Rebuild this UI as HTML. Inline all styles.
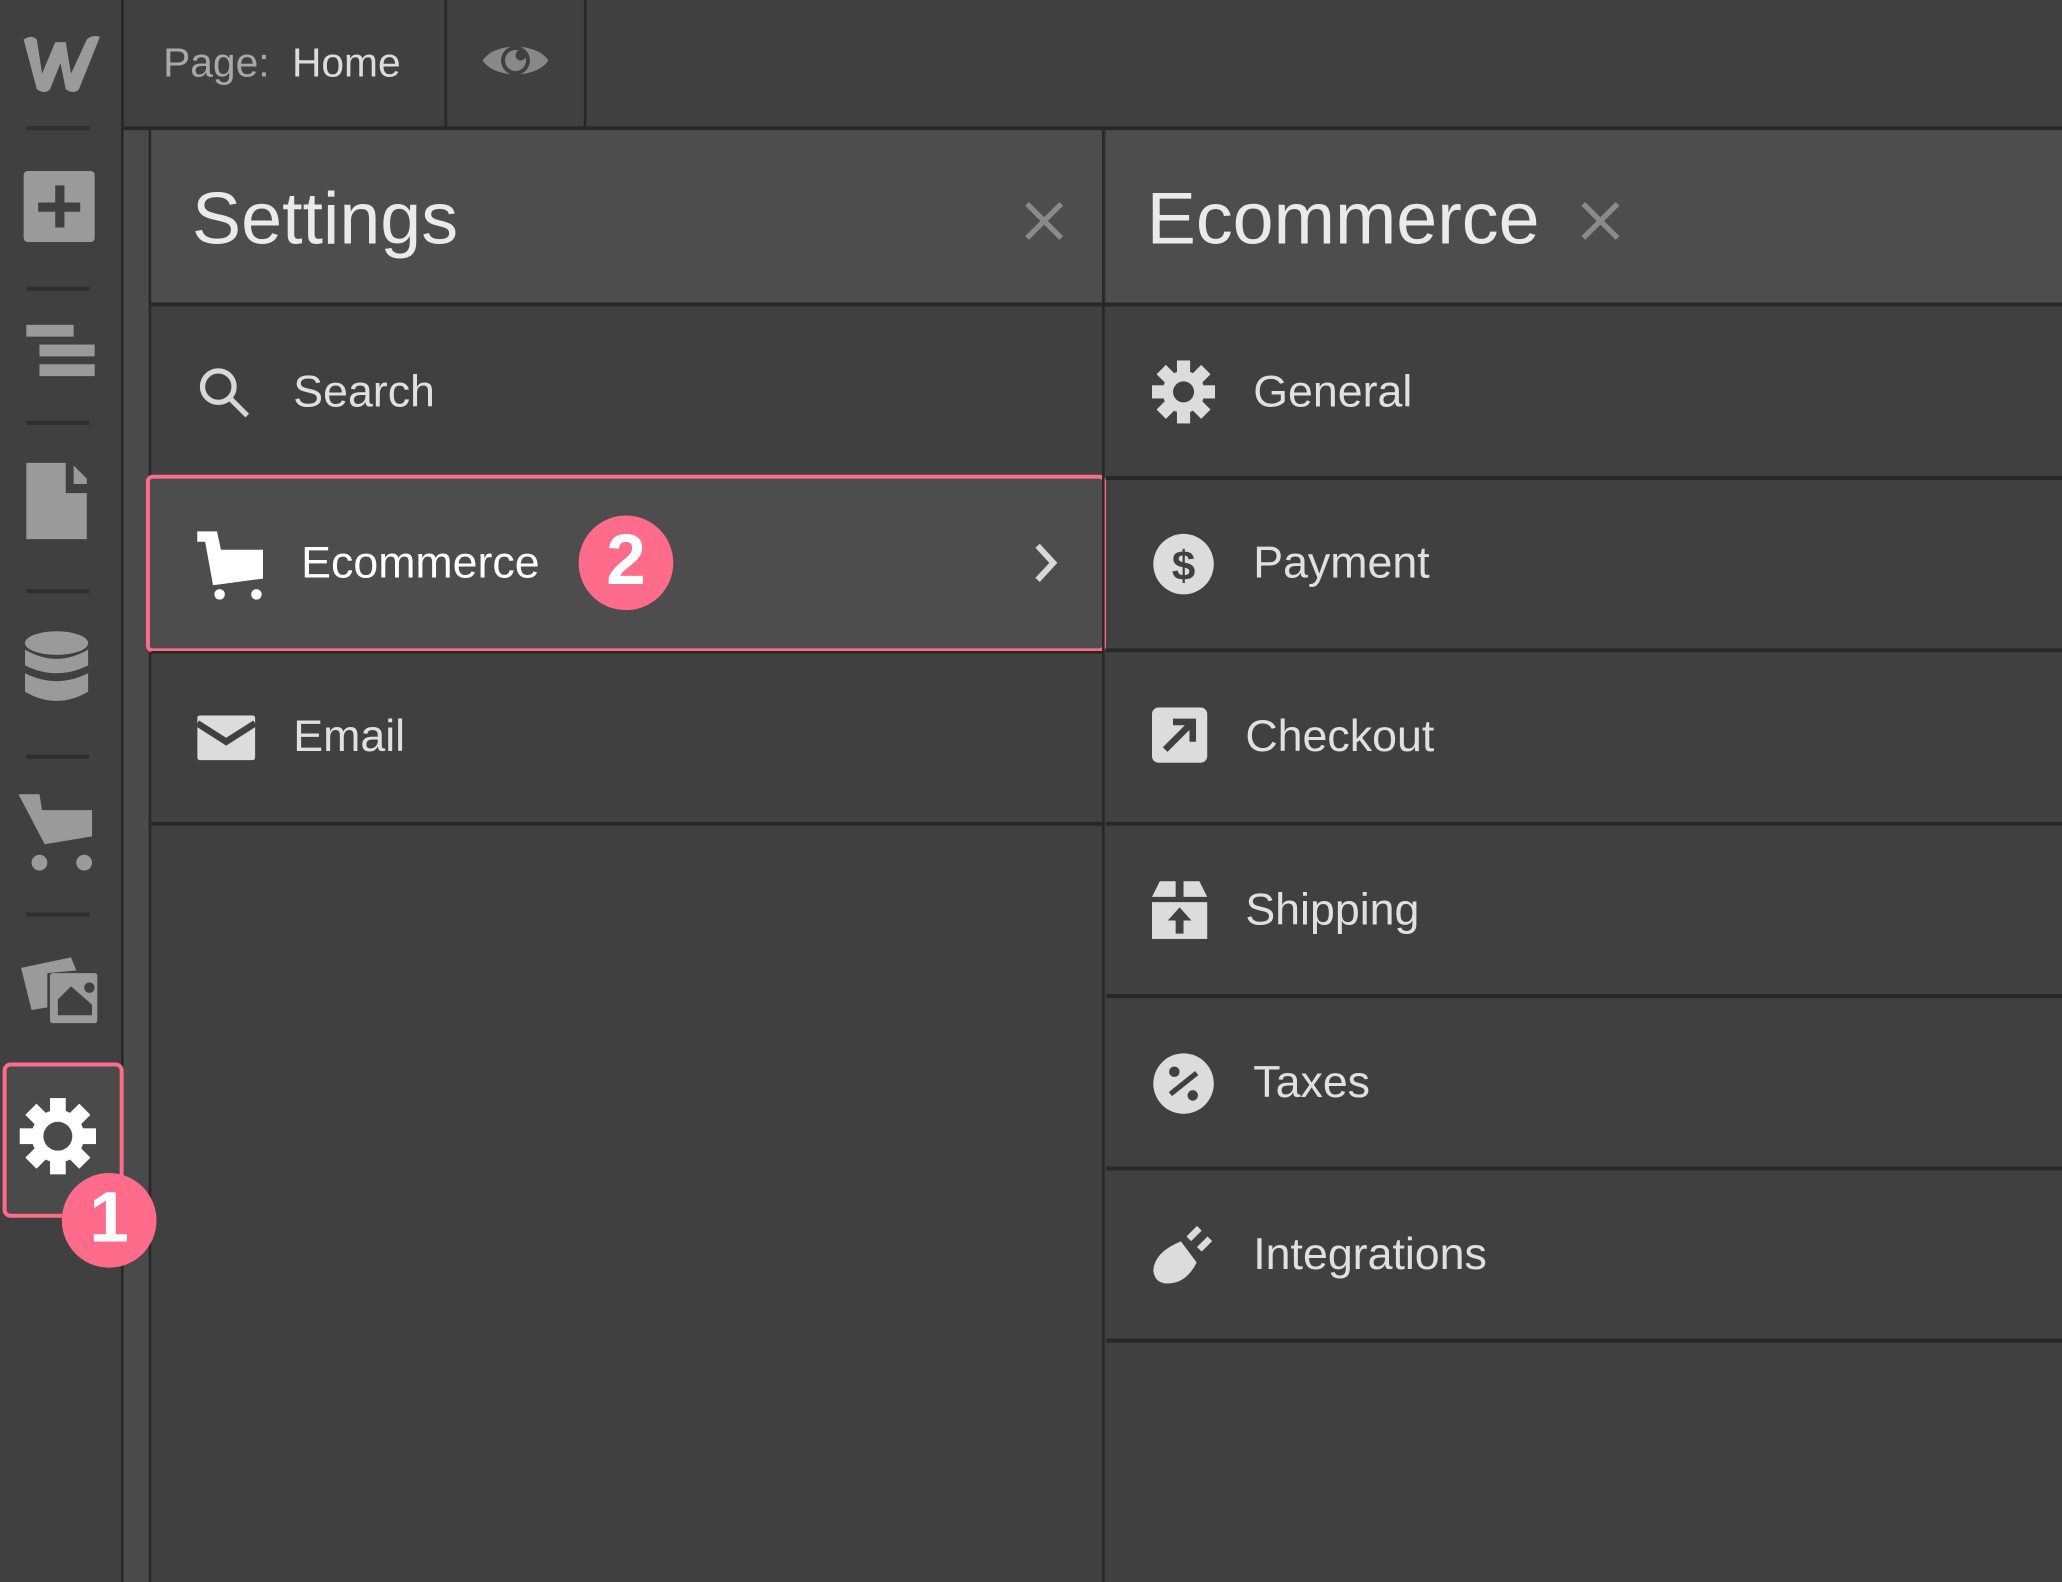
<!DOCTYPE html>
<html><head><meta charset="utf-8"><style>
html,body{margin:0;padding:0;background:#404040;overflow:hidden;width:2062px;height:1582px}
#w{position:absolute;left:0;top:0;width:1568px;height:1203px;transform:scale(1.31505);transform-origin:0 0;background:#404040;font-family:"Liberation Sans",sans-serif}
.a{position:absolute}
.t{position:absolute;font-size:34px;color:#e0e0e0;line-height:1}
.hl{position:absolute;height:2px;background:#282828}
.vl{position:absolute;width:2px;background:#282828}
.sep{position:absolute;left:20px;width:48px;height:3px;background:#2e2e2e}
</style></head><body><div id="w">
<div class="hl" style="left:94px;top:96px;width:1474px;height:3px"></div>
<div class="t" style="left:124px;top:32px;font-size:31px;color:#a8a8a8">Page:</div>
<div class="t" style="left:222px;top:32px;font-size:31px;color:#dcdcdc">Home</div>
<div class="vl" style="left:338px;top:0;height:96px"></div>
<div class="vl" style="left:444px;top:0;height:96px"></div>
<svg class="a" style="left:366px;top:28px" width="52" height="36" viewBox="0 0 52 36"><path d="M1 18C10 4 42 4 51 18C42 32 10 32 1 18Z" fill="#888"/><circle cx="26" cy="18" r="11" fill="#404040"/><circle cx="26" cy="18" r="8" fill="#888"/><circle cx="30" cy="14" r="4" fill="#404040"/></svg>
<div class="vl" style="left:92px;top:0;height:1203px;background:#262626"></div>
<div class="a" style="left:94px;top:99px;width:19px;height:1104px;background:#4a4a4a"></div>
<div class="vl" style="left:113px;top:99px;height:1104px"></div>
<svg class="a" style="left:16px;top:26px" width="62" height="46"><path d="M2 4Q8 0 12 4L16 30L26 6H34L38 30L50 4Q54 0 60 2L44 42Q40 46 34 42L30 22L22 42Q18 46 12 42Z" fill="#9a9a9a"/></svg>
<div class="sep" style="top:96px"></div>
<div class="a" style="left:18px;top:130px;width:54px;height:54px;background:#9a9a9a;border-radius:3px"></div>
<div class="a" style="left:29px;top:154px;width:32px;height:7px;background:#404040"></div>
<div class="a" style="left:42px;top:141px;width:7px;height:32px;background:#404040"></div>
<div class="sep" style="top:218px"></div>
<div class="a" style="left:20px;top:247px;width:36px;height:9px;background:#9a9a9a"></div>
<div class="a" style="left:30px;top:262px;width:42px;height:9px;background:#9a9a9a"></div>
<div class="a" style="left:30px;top:277px;width:42px;height:9px;background:#9a9a9a"></div>
<div class="sep" style="top:320px"></div>
<svg class="a" style="left:18px;top:350px" width="50" height="62"><path d="M2 2H32V25H48V60H2Z" fill="#9a9a9a"/><path d="M38 4L48 14V18H38Z" fill="#9a9a9a"/></svg>
<div class="sep" style="top:448px"></div>
<svg class="a" style="left:17px;top:478px" width="52" height="64"><ellipse cx="26" cy="11" rx="24" ry="9" fill="#9a9a9a"/><path d="M2 16Q26 30 50 16V28Q26 40 2 28Z" fill="#9a9a9a"/><path d="M2 34Q26 46 50 34V48Q26 62 2 48Z" fill="#9a9a9a"/></svg>
<div class="sep" style="top:574px"></div>
<svg class="a" style="left:12px;top:600px" width="62" height="66"><path d="M2 4H18L20 16H58V36L22 42Z" fill="#9a9a9a"/><circle cx="18" cy="56" r="6" fill="#9a9a9a"/><circle cx="52" cy="56" r="6" fill="#9a9a9a"/></svg>
<div class="sep" style="top:694px"></div>
<svg class="a" style="left:12px;top:720px" width="64" height="60"><path d="M4 16L42 8L46 18L24 20L24 46L12 48Z" fill="#9a9a9a"/><rect x="26" y="20" width="36" height="38" rx="2" fill="#9a9a9a"/><path d="M32 52L32 40L42 30L58 44V52Z" fill="#404040"/><circle cx="56" cy="31" r="4" fill="#404040"/></svg>
<div class="a" style="left:2px;top:808px;background:#4a4a4a;border:3px solid #ff6b8a;border-radius:6px;box-sizing:border-box;width:92px;height:118px"></div>
<svg class="a" style="left:14px;top:834px" width="60" height="60" viewBox="-30 -30 60 60"><g fill="#fff"><circle r="20"/><g id="tt"><rect x="-6" y="-29" width="12" height="14"/></g><use href="#tt" transform="rotate(45)"/><use href="#tt" transform="rotate(90)"/><use href="#tt" transform="rotate(135)"/><use href="#tt" transform="rotate(180)"/><use href="#tt" transform="rotate(225)"/><use href="#tt" transform="rotate(270)"/><use href="#tt" transform="rotate(315)"/></g><circle r="11" fill="#4a4a4a"/></svg>
<div class="a" style="left:47px;top:892px;width:72px;height:72px;border-radius:50%;background:#ff6b8a"></div>
<div class="t" style="left:47px;top:899px;width:72px;text-align:center;font-size:54px;font-weight:bold;color:#fff">1</div>
<div class="a" style="left:115px;top:99px;width:724px;height:132px;background:#4d4d4d"></div>
<div class="t" style="left:146px;top:138px;font-size:56px;color:#eaeaea">Settings</div>
<svg class="a" style="left:778px;top:152px" width="32" height="32"><path d="M3 3L29 29M29 3L3 29" stroke="#8a8a8a" stroke-width="4"/></svg>
<div class="hl" style="left:115px;top:230px;width:1453px;height:3px"></div>
<svg class="a" style="left:150px;top:278px" width="42" height="42"><circle cx="16" cy="16" r="12" fill="none" stroke="#d8d8d8" stroke-width="4"/><path d="M25 25L38 38" stroke="#d8d8d8" stroke-width="4"/></svg>
<div class="t" style="left:223px;top:281px">Search</div>
<div class="a" style="left:111px;top:361px;width:730px;height:135px;background:#4d4d4d;border:3px solid #ff6b8a;border-radius:5px;box-sizing:border-box"></div>
<svg class="a" style="left:148px;top:404px" width="56" height="52"><path d="M2 0H17L20 14H52V36L14 41L8 8H2Z" fill="#fff"/><circle cx="19" cy="48" r="4" fill="#fff"/><circle cx="47" cy="48" r="4" fill="#fff"/></svg>
<div class="t" style="left:229px;top:411px;color:#fff">Ecommerce</div>
<div class="a" style="left:440px;top:392px;width:72px;height:72px;border-radius:50%;background:#ff6b8a"></div>
<div class="t" style="left:440px;top:399px;width:72px;text-align:center;font-size:54px;font-weight:bold;color:#fff">2</div>
<svg class="a" style="left:784px;top:412px" width="24" height="32"><path d="M5 3L17 16L5 29" fill="none" stroke="#d8d8d8" stroke-width="4.5"/></svg>
<div class="hl" style="left:115px;top:495px;width:724px"></div>
<svg class="a" style="left:150px;top:544px" width="46" height="36"><rect x="0" y="0" width="44" height="34" rx="2" fill="#dcdcdc"/><path d="M0 6L22 20L44 6" fill="none" stroke="#404040" stroke-width="5"/></svg>
<div class="t" style="left:223px;top:543px">Email</div>
<div class="hl" style="left:115px;top:625px;width:724px;height:3px"></div>
<div class="vl" style="left:838px;top:99px;height:1104px"></div>
<div class="a" style="left:841px;top:99px;width:727px;height:131px;background:#4d4d4d"></div>
<div class="t" style="left:872px;top:138px;font-size:56px;color:#eaeaea">Ecommerce</div>
<svg class="a" style="left:1201px;top:152px" width="32" height="32"><path d="M3 3L29 29M29 3L3 29" stroke="#8a8a8a" stroke-width="4"/></svg>
<svg class="a" style="left:876px;top:274px" width="48" height="48" viewBox="-24 -24 48 48"><g fill="#dcdcdc"><circle r="16"/><g id="t2"><rect x="-5" y="-24" width="10" height="12"/></g><use href="#t2" transform="rotate(45)"/><use href="#t2" transform="rotate(90)"/><use href="#t2" transform="rotate(135)"/><use href="#t2" transform="rotate(180)"/><use href="#t2" transform="rotate(225)"/><use href="#t2" transform="rotate(270)"/><use href="#t2" transform="rotate(315)"/></g><circle r="8" fill="#404040"/></svg>
<div class="t" style="left:953px;top:281px">General</div>
<div class="hl" style="left:841px;top:362px;width:727px;height:3px"></div>
<svg class="a" style="left:876px;top:405px" width="48" height="48"><circle cx="24" cy="24" r="23" fill="#dcdcdc"/><text x="24" y="36" text-anchor="middle" font-family="Liberation Sans" font-weight="bold" font-size="32" fill="#404040">$</text></svg>
<div class="t" style="left:953px;top:411px">Payment</div>
<div class="hl" style="left:841px;top:493px;width:727px;height:3px"></div>
<svg class="a" style="left:876px;top:538px" width="44" height="44"><rect x="0" y="0" width="42" height="42" rx="5" fill="#dcdcdc"/><path d="M10 32L30 12M16 11H31V26" fill="none" stroke="#404040" stroke-width="5"/></svg>
<div class="t" style="left:947px;top:543px">Checkout</div>
<div class="hl" style="left:841px;top:625px;width:727px;height:3px"></div>
<svg class="a" style="left:876px;top:670px" width="44" height="46"><path d="M0 12L6 0H18V12ZM24 0H36L42 12H24Z" fill="#dcdcdc"/><rect x="0" y="16" width="42" height="28" fill="#dcdcdc"/><path d="M21 20L30 30H24V40H18V30H12Z" fill="#404040"/></svg>
<div class="t" style="left:947px;top:675px">Shipping</div>
<div class="hl" style="left:841px;top:756px;width:727px;height:3px"></div>
<svg class="a" style="left:876px;top:800px" width="48" height="48"><circle cx="24" cy="24" r="23" fill="#dcdcdc"/><circle cx="17" cy="15" r="4" fill="#404040"/><circle cx="31" cy="33" r="4" fill="#404040"/><path d="M14 32L34 16" stroke="#404040" stroke-width="4"/></svg>
<div class="t" style="left:953px;top:806px">Taxes</div>
<div class="hl" style="left:841px;top:887px;width:727px;height:3px"></div>
<svg class="a" style="left:876px;top:930px" width="48" height="48"><path d="M22 14L34 30Q26 46 12 46Q2 46 1 36Q2 22 22 14Z" fill="#dcdcdc"/><path d="M28 12L36 4M36 20L44 12" stroke="#dcdcdc" stroke-width="5"/></svg>
<div class="t" style="left:953px;top:937px">Integrations</div>
<div class="hl" style="left:841px;top:1018px;width:727px;height:3px"></div>
</div></body></html>
